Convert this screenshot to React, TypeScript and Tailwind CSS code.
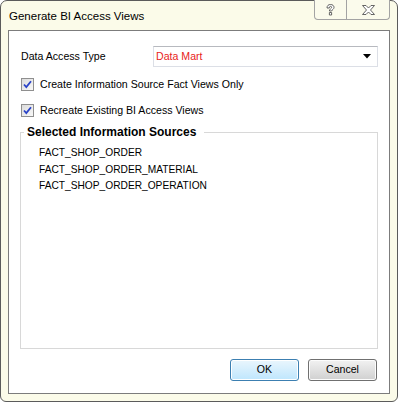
import React from "react";

const sources = [
  "FACT_SHOP_ORDER",
  "FACT_SHOP_ORDER_MATERIAL",
  "FACT_SHOP_ORDER_OPERATION",
];

function CheckBox() {
  return (
    <span className="flex h-[13px] w-[13px] items-center justify-center border border-[#8f8f8f] bg-gradient-to-br from-[#dcdcdc] to-[#f8f8f8]">
      <svg width="9" height="9" viewBox="0 0 9 9">
        <path d="M1 4.5 L3.3 7 L8 1.2" fill="none" stroke="#2a43c8" strokeWidth="1.8" />
      </svg>
    </span>
  );
}

export default function App() {
  return (
    <div
      className="flex h-[402px] w-[398px] flex-col rounded-t-[7px] rounded-b-[6px] border border-[#5b5b5b] bg-[#fbfbe9] px-[7px] pb-[7px] text-[10.6px] text-black"
      style={{ fontFamily: "'Liberation Sans', sans-serif" }}
    >
      {/* Title bar */}
      <div className="flex h-[29px] shrink-0 items-start justify-between">
        <span className="mt-[8px] pl-[1px] text-[11.5px] leading-[14px]">Generate BI Access Views</span>
        <div className="-mt-px flex h-[20px] rounded-b-[4px] border border-t-0 border-[#a3a3a3] bg-[#fbfbec]">
          <div className="flex w-[32px] items-center justify-center border-r border-[#a3a3a3]">
            <svg width="9" height="12" viewBox="0 0 9 12">
              <path
                d="M1 4 C1 1.5 2.5 0.5 4.5 0.5 C6.5 0.5 8 1.6 8 3.4 C8 5.2 6 5.6 5.6 7 L3.4 7 C3.4 5 5.6 4.6 5.6 3.4 C5.6 2.6 5.1 2.3 4.5 2.3 C3.8 2.3 3.4 2.8 3.4 4 Z M3.4 8.5 L5.6 8.5 L5.6 11 L3.4 11 Z"
                fill="#fff"
                stroke="#555"
                strokeWidth="0.9"
              />
            </svg>
          </div>
          <div className="flex w-[42px] items-center justify-center">
            <svg width="13" height="10" viewBox="0 0 13 10">
              <path
                d="M0.5 0.5 L4 0.5 L6.5 3 L9 0.5 L12.5 0.5 L8.5 5 L12.5 9.5 L9 9.5 L6.5 7 L4 9.5 L0.5 9.5 L4.5 5 Z"
                fill="#fff"
                stroke="#555"
                strokeWidth="0.9"
              />
            </svg>
          </div>
        </div>
      </div>

      {/* Client area */}
      <div className="flex flex-1 flex-col border border-[#7c7c7c] bg-white px-[11px] pb-[12px] pt-[15px]">
        <div className="flex h-[21px] items-center">
          <span className="w-[133px] pl-px">Data Access Type</span>
          <div className="flex h-[21px] flex-1 items-center justify-between border border-[#dcdfe6] border-t-[#b7b9bf] pl-[2px] pr-[6px]">
            <span className="text-[#e8231a]">Data Mart</span>
            <svg width="8" height="5" viewBox="0 0 8 5">
              <path d="M0 0 L8 0 L4 4.5 Z" fill="#000" />
            </svg>
          </div>
        </div>

        <label className="mt-[11px] flex h-[13px] items-center gap-[6px] pl-[1px]">
          <CheckBox />
          <span>Create Information Source Fact Views Only</span>
        </label>
        <label className="mt-[13px] flex h-[13px] items-center gap-[6px] pl-[1px]">
          <CheckBox />
          <span>Recreate Existing BI Access Views</span>
        </label>

        <fieldset className="mt-[6px] h-[226px] border border-[#d8d8d8]">
          <legend className="ml-[3px] pl-[3px] pr-[8px] text-[12px] font-bold">Selected Information Sources</legend>
          <div className="flex flex-col pl-[18px] pt-[4px] text-[10.2px]">
            {sources.map((s) => (
              <div key={s} className="h-[16.5px] leading-[16px]">
                {s}
              </div>
            ))}
          </div>
        </fieldset>

        <div className="mt-auto flex justify-end gap-[9px] pr-[1px]">
          <button className="h-[22px] w-[69px] rounded-[3px] border border-[#3c7fb1] bg-gradient-to-b from-[#eaf6fd] to-[#bee6fd] shadow-[inset_0_0_0_1px_#ffffff]">
            OK
          </button>
          <button className="h-[22px] w-[69px] rounded-[3px] border border-[#707070] bg-gradient-to-b from-[#f2f2f2] to-[#d0d0d0] shadow-[inset_0_0_0_1px_#fcfcfc]">
            Cancel
          </button>
        </div>
      </div>
    </div>
  );
}
